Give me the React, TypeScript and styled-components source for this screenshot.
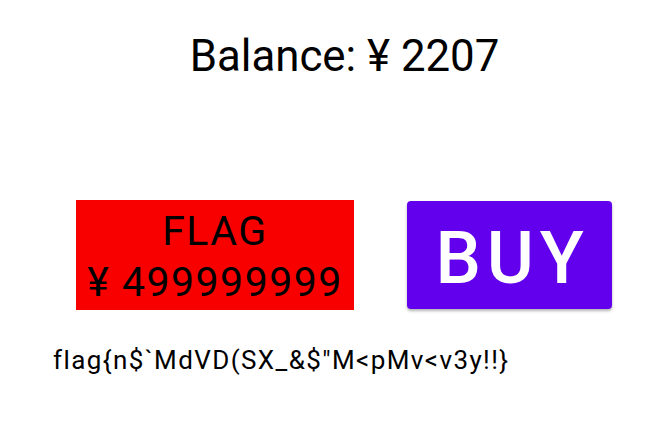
import React from 'react'
import styled, { createGlobalStyle } from 'styled-components'

const GlobalStyle = createGlobalStyle`
  html, body {
    margin: 0;
    padding: 0;
    background: #ffffff;
    font-family: Roboto, "Noto Sans", sans-serif;
  }
`

const Screen = styled.div`
  width: 651px;
  height: 425px;
  display: flex;
  flex-direction: column;
  align-items: center;
`

const Balance = styled.div`
  margin-top: 31px;
  margin-left: 38px;
  font-size: 43.8px;
  line-height: 51px;
  color: #000000;
  text-align: center;
`

const Buttons = styled.div`
  margin-top: 118px;
  width: 100%;
  display: flex;
  align-items: center;
  padding-left: 76px;
  box-sizing: border-box;
  gap: 53px;
`

const FlagBox = styled.div`
  width: 278px;
  height: 110px;
  padding-top: 4px;
  box-sizing: border-box;
  background: #f80000;
  display: flex;
  flex-direction: column;
  justify-content: center;
  align-items: center;
  font-size: 41px;
  line-height: 51px;
  letter-spacing: 1.5px;
  color: #000000;
`

const BuyButton = styled.button`
  width: 205px;
  height: 108px;
  border: none;
  border-radius: 4px;
  background: #6200ee;
  color: #ffffff;
  font-family: Roboto, sans-serif;
  font-size: 72px;
  font-weight: 500;
  letter-spacing: 0.08em;
  box-shadow: 0 2px 3px rgba(0, 0, 0, 0.3);
  padding: 6px 0 0 6px;
  cursor: pointer;
`

const FlagText = styled.div`
  align-self: flex-start;
  margin-left: 53px;
  margin-top: 35px;
  font-size: 26px;
  line-height: 30px;
  letter-spacing: 1.4px;
  color: #000000;
`

export default function App() {
  const balance = 2207
  return (
    <>
      <GlobalStyle />
      <Screen>
        <Balance>Balance: ¥ {balance}</Balance>
        <Buttons>
          <FlagBox>
            <span>FLAG</span>
            <span>¥ 499999999</span>
          </FlagBox>
          <BuyButton>BUY</BuyButton>
        </Buttons>
        <FlagText>{'flag{n$`MdVD(SX_&$"M<pMv<v3y!!}'}</FlagText>
      </Screen>
    </>
  )
}
